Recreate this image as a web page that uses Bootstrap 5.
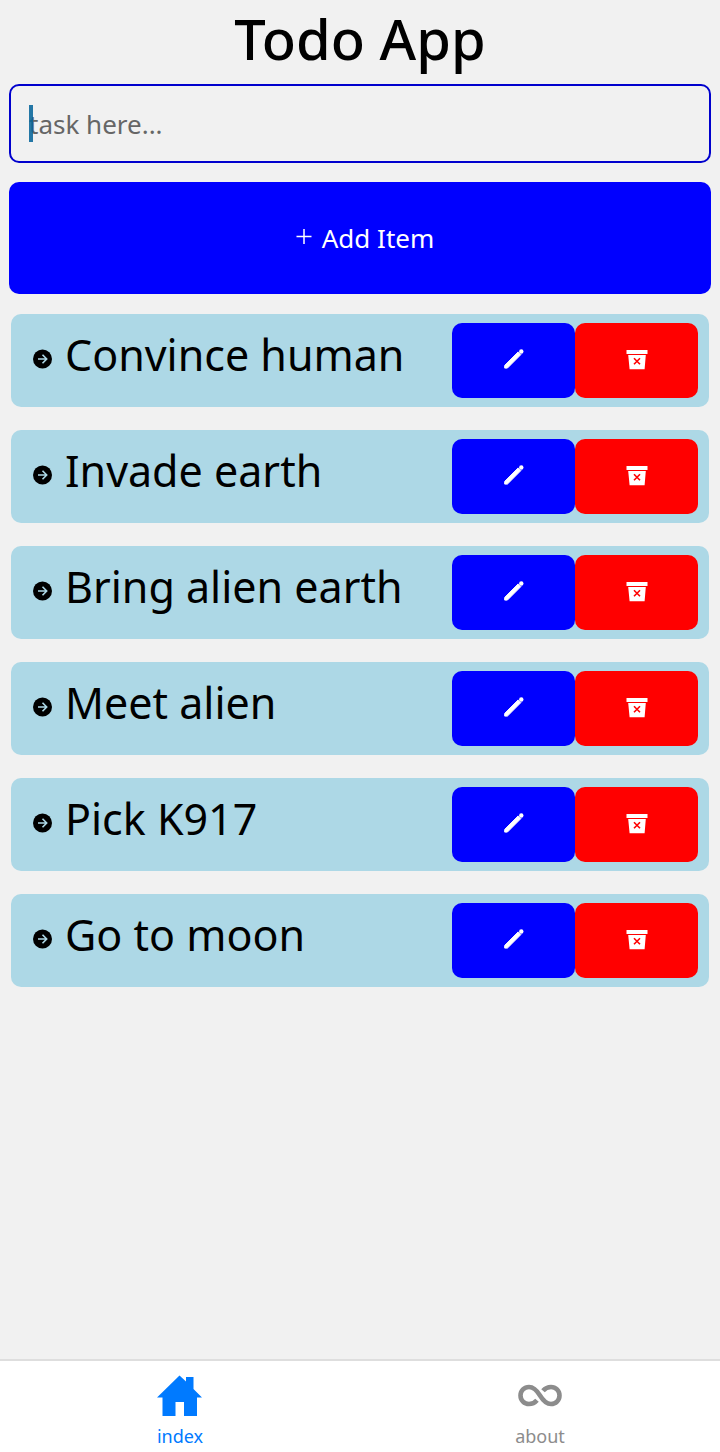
<!DOCTYPE html>
<html lang="en">
<head>
<meta charset="utf-8">
<meta name="viewport" content="width=device-width, initial-scale=1">
<title>Todo App</title>
<link href="https://cdn.jsdelivr.net/npm/bootstrap@5.3.0/dist/css/bootstrap.min.css" rel="stylesheet">
<style>
  body { background: #f1f1f1; color: #000; font-family: "Noto Sans", "Open Sans", sans-serif; }
  .app-title { font-size: 56px; font-weight: 500; line-height: 76px; }
  .task-entry { padding: 0 9px; }
  .task-field, .task-field:focus { height: 79px; padding: 0 18px; border: 2px solid #0000cd; border-radius: 10px; background: transparent; box-shadow: none; font-size: 26px; color: #000; }
  .task-field::placeholder { color: #666; opacity: 1; }
  .text-cursor { left: 20px; top: 21px; width: 4px; height: 37px; background: #006199; opacity: .85; }
  .add-btn, .add-btn:hover { height: 112px; margin-top: 19px; padding-left: 20px; border: 0; border-radius: 10px; background: #00f; color: #fff; font-size: 26px; }
  .task-list { gap: 23px; margin: 20px 11px 24px; }
  .task-row { height: 93px; padding: 9px 11px 9px 22px; border-radius: 10px; background: #add8e6; }
  .task-name { font-size: 43px; line-height: 64px; margin-left: 12px; }
  .task-actions { flex: 0 0 246px; }
  .task-btn, .task-btn:hover { padding: 0 0 5px; border: 0; border-radius: 10px; color: #fff; }
  .edit-btn, .edit-btn:hover { background: #00f; }
  .delete-btn, .delete-btn:hover { background: #f00; }
  .tab-bar { height: 93px; border-top: 2px solid #dedede; background: #fff; }
  .tab-link { color: #8c8c8c; font-size: 18px; line-height: 24px; padding-top: 10px; }
  .tab-link.active { color: #007aff; }
  .tab-link svg { margin-bottom: 5px; }
</style>
</head>
<body class="d-flex flex-column min-vh-100">
<svg class="d-none" aria-hidden="true">
  <symbol id="icon-arrow" viewBox="0 0 20 20"><circle cx="9.500" cy="10" r="9.500"/><path d="M5 10h8.500M9.500 5.700l4.200 4.300-4.200 4.300" fill="none" stroke="#add8e6" stroke-width="1.600"/></symbol>
  <symbol id="icon-edit" viewBox="0 0 22 22"><path d="M1.700 17.400 15.200 3.900l2.700 2.700L4.400 20.100H1.700z" fill="#fff" stroke="#fff" stroke-width="1" stroke-linejoin="round"/><circle cx="18.300" cy="3.500" r="2.200" fill="#fff"/></symbol>
  <symbol id="icon-delete" viewBox="0 0 22 20"><path d="M.5 0h21v4H.5zM2.200 5h17.600l-1.200 14.300H3.600z" fill="#fff"/><path d="m8 8.300 6 6m0-6-6 6" stroke="#f00" stroke-width="1.600"/></symbol>
</svg>
<main class="flex-grow-1">
  <h1 class="app-title text-center mb-2">Todo App</h1>
  <form class="task-entry" onsubmit="return false">
    <div class="position-relative">
      <input class="form-control task-field" type="text" placeholder="task here..." aria-label="Task">
      <span class="text-cursor position-absolute"></span>
    </div>
    <button type="submit" class="btn add-btn w-100 d-flex align-items-center justify-content-center">
      <svg class="me-2" width="20" height="20" viewBox="0 0 20 20" aria-hidden="true"><path d="M10 1v15M2.500 8.500h15" stroke="#fff" stroke-width="1.500"/></svg>
      <span>Add Item</span>
    </button>
  </form>
  <ul class="task-list list-unstyled d-flex flex-column" id="tasks"></ul>
</main>
<nav class="tab-bar d-flex text-center">
  <a href="#index" class="tab-link active w-50 d-flex flex-column align-items-center text-decoration-none">
    <svg width="48" height="48" viewBox="0 0 48 48" fill="currentColor" aria-hidden="true"><path d="M1 26.500 23.500 4.500l6.500 6V6h7.500v12L46 26.500h-5V45H28V31h-8.500v14H6.500V26.500z"/></svg>
    <span>index</span>
  </a>
  <a href="#about" class="tab-link w-50 d-flex flex-column align-items-center text-decoration-none">
    <svg width="48" height="48" viewBox="0 0 48 48" fill="none" stroke="currentColor" stroke-width="4.600" aria-hidden="true"><path d="M21 29.200C18.800 31.800 16.200 33 13 33a8.500 8.500 0 0 1 0-17c4.500 0 7.500 2.800 11 8.500S31 33 35 33a8.500 8.500 0 0 0 0-17c-3.200 0-5.800 1.200-8 3.800"/></svg>
    <span>about</span>
  </a>
</nav>
<script>
  const tasks = ["Convince human", "Invade earth", "Bring alien earth", "Meet alien", "Pick K917", "Go to moon"];
  document.getElementById("tasks").innerHTML = tasks.map(name => `
    <li class="task-row d-flex">
      <div class="d-flex align-items-center flex-grow-1 align-self-start">
        <svg class="flex-shrink-0 mt-2" width="20" height="20" aria-hidden="true"><use href="#icon-arrow"/></svg>
        <span class="task-name">${name}</span>
      </div>
      <div class="task-actions d-flex">
        <button type="button" class="btn task-btn edit-btn w-50" aria-label="Edit ${name}"><svg width="22" height="22"><use href="#icon-edit"/></svg></button>
        <button type="button" class="btn task-btn delete-btn w-50" aria-label="Delete ${name}"><svg width="22" height="20"><use href="#icon-delete"/></svg></button>
      </div>
    </li>`).join("");
</script>
<script src="https://cdn.jsdelivr.net/npm/bootstrap@5.3.0/dist/js/bootstrap.bundle.min.js"></script>
</body>
</html>
